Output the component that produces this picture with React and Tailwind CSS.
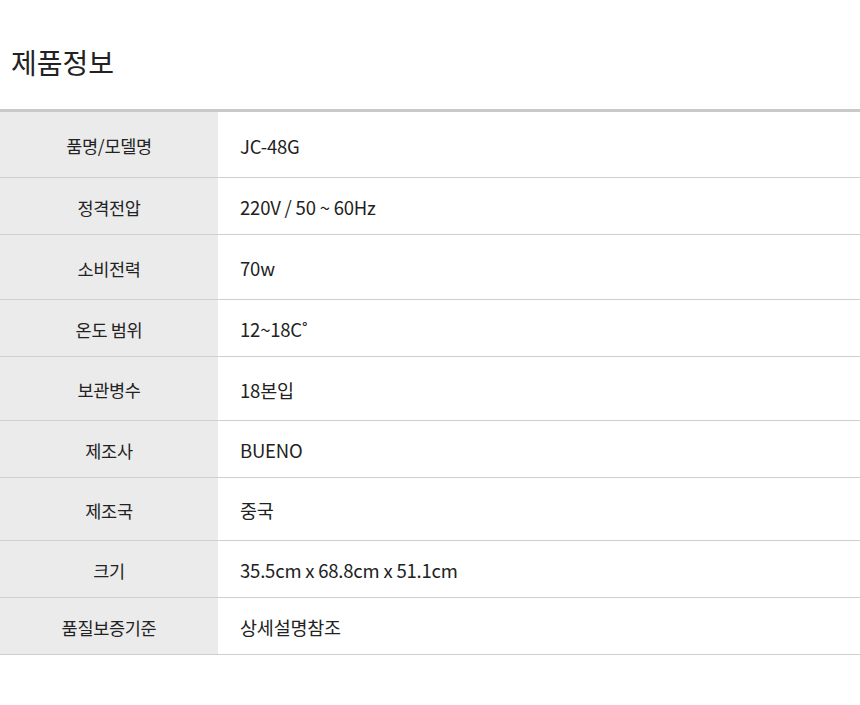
const specs = [
  { label: '품명/모델명', value: 'JC-48G', h: 'h-[66px]' },
  { label: '정격전압', value: '220V / 50 ~ 60Hz', h: 'h-[57px]' },
  { label: '소비전력', value: '70w', h: 'h-[65px]' },
  { label: '온도 범위', value: '12~18C˚', h: 'h-[57px]' },
  { label: '보관병수', value: '18본입', h: 'h-[64px]' },
  { label: '제조사', value: 'BUENO', h: 'h-[57px]' },
  { label: '제조국', value: '중국', h: 'h-[63px]' },
  { label: '크기', value: '35.5cm x 68.8cm x 51.1cm', h: 'h-[57px]' },
  { label: '품질보증기준', value: '상세설명참조', h: 'h-[57px]' },
];

export default function App() {
  return (
    <div
      className="w-[860px] h-[705px] bg-white text-[#222]"
      style={{ fontFamily: '"Noto Sans CJK KR", "Noto Sans", sans-serif' }}
    >
      <h1 className="pl-[11px] pt-[40px] h-[109px] text-[28px] leading-[44px]">제품정보</h1>
      <div className="border-t-[3px] border-[#c9c9c9]">
        {specs.map((row, idx) => (
          <div key={idx} className={`flex border-b border-[#cfcfcf] ${row.h}`}>
            <div className="w-[218px] bg-[#ebebeb] flex items-center justify-center pt-[4px] text-[17.5px] tracking-[-0.3px]">
              {row.label}
            </div>
            <div className="flex-1 flex items-center pl-[22px] pt-[4px] text-[18.5px] tracking-[-0.2px]">
              {row.value}
            </div>
          </div>
        ))}
      </div>
    </div>
  );
}
